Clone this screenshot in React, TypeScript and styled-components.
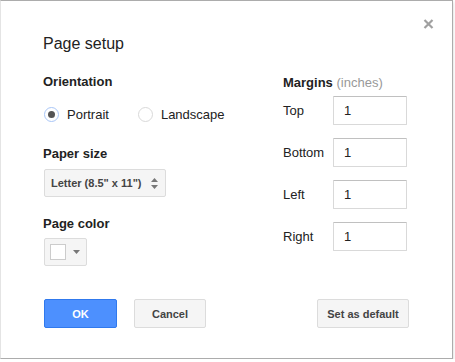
import React from "react";
import styled, { createGlobalStyle } from "styled-components";

const Global = createGlobalStyle`
  html, body { margin: 0; padding: 0; background: #fff; }
  body { font-family: "Liberation Sans", Arial, sans-serif; color: #222; }
`;

const Dialog = styled.div`
  position: relative;
  box-sizing: border-box;
  width: 453px;
  border: 1px solid #acacac;
  border-left-color: #e4e4e4;
  box-shadow: 0 2px 3px rgba(0, 0, 0, 0.18);
  background: #fff;
  padding: 33px 43px 30px 42px;
`;

const Close = styled.button`
  position: absolute;
  top: 17px;
  right: 17px;
  width: 13px;
  height: 12px;
  padding: 0;
  border: 0;
  background: transparent;
  display: flex;
  align-items: center;
  justify-content: center;
`;

const Title = styled.h1`
  margin: 0;
  font-size: 16px;
  line-height: 20px;
  font-weight: normal;
  color: #222;
`;

const Columns = styled.div`
  display: flex;
  margin-top: 20px;
`;

const LeftCol = styled.div`
  width: 240px;
  display: flex;
  flex-direction: column;
`;

const RightCol = styled.div`
  display: flex;
  flex-direction: column;
  margin-top: 1px;
`;

const Heading = styled.div<{ $mt?: number }>`
  font-size: 13px;
  line-height: 16px;
  font-weight: bold;
  color: #222;
  margin-top: ${(p) => p.$mt ?? 0}px;
`;

const Muted = styled.span`
  font-weight: normal;
  color: #999;
`;

const RadioRow = styled.div`
  display: flex;
  align-items: center;
  margin-top: 16px;
  height: 16px;
  padding-left: 1px;
`;

const RadioItem = styled.label`
  display: flex;
  align-items: center;
  font-size: 13px;
  color: #222;
  margin-right: 29px;
`;

const RadioCircle = styled.span<{ $checked?: boolean }>`
  box-sizing: border-box;
  width: 15px;
  height: 15px;
  border-radius: 50%;
  border: 1px solid ${(p) => (p.$checked ? "#a9c6f7" : "#d9d9d9")};
  background: #fff;
  display: flex;
  align-items: center;
  justify-content: center;
  margin-right: 8px;
  &::after {
    content: "";
    display: ${(p) => (p.$checked ? "block" : "none")};
    width: 7px;
    height: 7px;
    border-radius: 50%;
    background: #555;
  }
`;

const GrayBox = styled.div<{ $w: number }>`
  box-sizing: border-box;
  width: ${(p) => p.$w}px;
  height: 28px;
  margin-left: 1px;
  border: 1px solid #dcdcdc;
  border-radius: 2px;
  background: #f5f5f5;
  display: flex;
  align-items: center;
`;

const SelectBox = styled(GrayBox)`
  margin-top: 7px;
  padding: 0 7px 0 6px;
  justify-content: space-between;
  font-size: 11px;
  font-weight: bold;
  color: #444;
`;

const ColorBox = styled(GrayBox)`
  margin-top: 6px;
  padding: 0 6px 0 5px;
  justify-content: space-between;
`;

const Swatch = styled.span`
  box-sizing: border-box;
  width: 16px;
  height: 16px;
  background: #fff;
  border: 1px solid #ccc;
`;

const MarginRow = styled.div<{ $first?: boolean }>`
  display: flex;
  align-items: center;
  margin-top: ${(p) => (p.$first ? 5 : 13)}px;
`;

const MarginLabel = styled.label`
  width: 50px;
  font-size: 13px;
  color: #222;
`;

const Input = styled.input`
  box-sizing: border-box;
  width: 74px;
  height: 29px;
  margin: 0;
  padding: 0 10px;
  border: 1px solid #d9d9d9;
  border-top-color: #c0c0c0;
  border-radius: 1px;
  font-family: "Liberation Sans", Arial, sans-serif;
  font-size: 13px;
  color: #222;
  background: #fff;
  outline: none;
`;

const Buttons = styled.div`
  display: flex;
  align-items: center;
  margin-top: 33px;
  padding-left: 1px;
`;

const Button = styled.button<{ $primary?: boolean; $w: number; $ml?: number; $auto?: boolean }>`
  box-sizing: border-box;
  width: ${(p) => p.$w}px;
  height: 29px;
  margin: 0;
  margin-left: ${(p) => (p.$auto ? "auto" : `${p.$ml ?? 0}px`)};
  padding: 0;
  border-radius: 2px;
  border: 1px solid ${(p) => (p.$primary ? "#3079ed" : "#dcdcdc")};
  background: ${(p) => (p.$primary ? "#4d90fe" : "#f5f5f5")};
  color: ${(p) => (p.$primary ? "#fff" : "#444")};
  font-family: "Liberation Sans", Arial, sans-serif;
  font-size: 11px;
  font-weight: bold;
`;

const margins = ["Top", "Bottom", "Left", "Right"];

export default function App() {
  return (
    <>
      <Global />
      <Dialog>
        <Close aria-label="Close">
          <svg width="11" height="10" viewBox="0 0 11 10">
            <path d="M1.5 1 L9.5 9 M9.5 1 L1.5 9" stroke="#a0a0a0" strokeWidth="2.2" strokeLinecap="butt" />
          </svg>
        </Close>
        <Title>Page setup</Title>
        <Columns>
          <LeftCol>
            <Heading>Orientation</Heading>
            <RadioRow>
              <RadioItem>
                <RadioCircle $checked />
                Portrait
              </RadioItem>
              <RadioItem>
                <RadioCircle />
                Landscape
              </RadioItem>
            </RadioRow>
            <Heading $mt={24}>Paper size</Heading>
            <SelectBox $w={122}>
              <span>Letter (8.5" x 11")</span>
              <svg width="7" height="11" viewBox="0 0 7 11">
                <path d="M3.5 0 L7 4 L0 4 Z M0 7 L7 7 L3.5 11 Z" fill="#777" />
              </svg>
            </SelectBox>
            <Heading $mt={19}>Page color</Heading>
            <ColorBox $w={43}>
              <Swatch />
              <svg width="7" height="4" viewBox="0 0 7 4">
                <path d="M0 0 L7 0 L3.5 4 Z" fill="#777" />
              </svg>
            </ColorBox>
          </LeftCol>
          <RightCol>
            <Heading>
              Margins <Muted>(inches)</Muted>
            </Heading>
            {margins.map((m, i) => (
              <MarginRow key={m} $first={i === 0}>
                <MarginLabel>{m}</MarginLabel>
                <Input defaultValue="1" />
              </MarginRow>
            ))}
          </RightCol>
        </Columns>
        <Buttons>
          <Button $primary $w={73}>OK</Button>
          <Button $w={72} $ml={17}>Cancel</Button>
          <Button $w={92} $auto>Set as default</Button>
        </Buttons>
      </Dialog>
    </>
  );
}
